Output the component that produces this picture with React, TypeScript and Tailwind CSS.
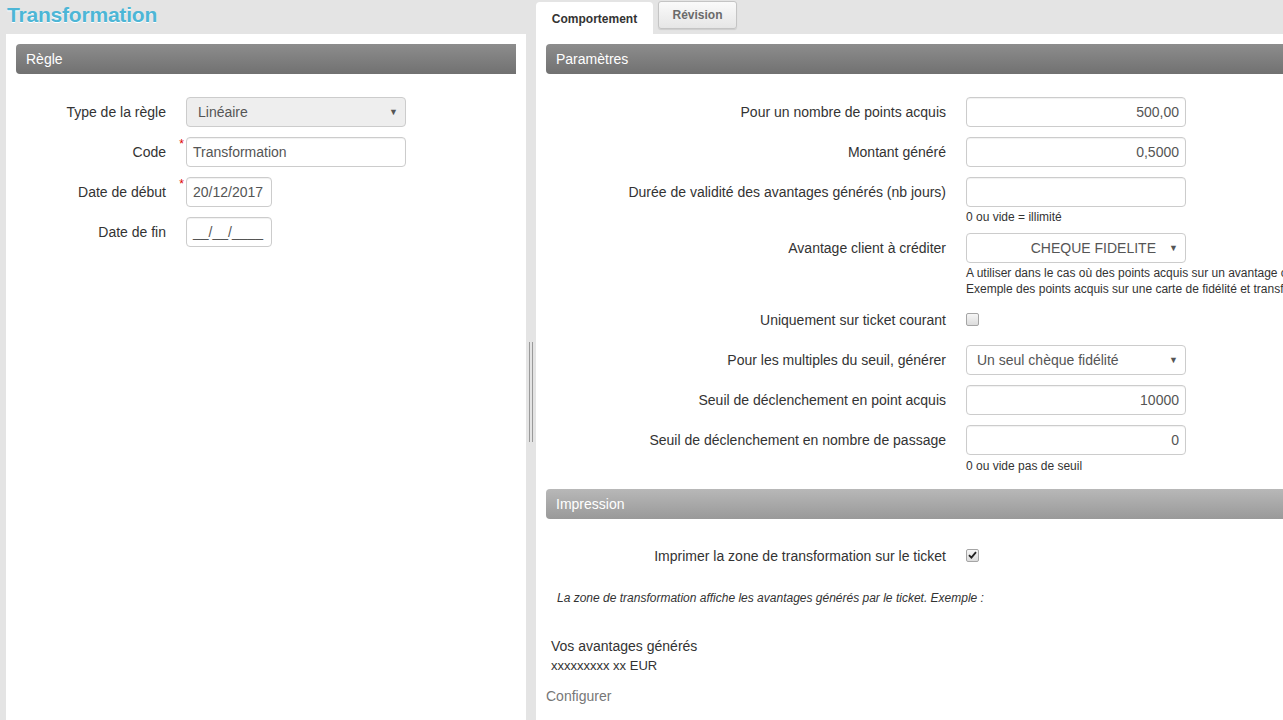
import type { ReactNode } from 'react'

const font = { fontFamily: '"Liberation Sans", Arial, sans-serif' }

function SectionBar({ title, light }: { title: string; light?: boolean }) {
  return (
    <div
      className={`flex h-[30px] items-center rounded-l-[4px] pl-[10px] text-[14px] text-white ${
        light ? 'bg-gradient-to-b from-[#b8b8b8] to-[#999999]' : 'bg-gradient-to-b from-[#8d8d8d] to-[#717171]'
      }`}
    >
      {title}
    </div>
  )
}

function Row({ label, labelW, required, children }: { label: string; labelW: string; required?: boolean; children: ReactNode }) {
  return (
    <div className="flex h-[30px] items-center">
      <div className={`${labelW} shrink-0 text-right text-[14px] text-[#333]`}>{label}</div>
      <div className="relative w-[20px] shrink-0 self-stretch">
        {required && <span className="absolute right-[2px] top-[1px] text-[12px] leading-[12px] text-[#d00]">*</span>}
      </div>
      {children}
    </div>
  )
}

function TextBox({ value, w = 'w-[220px]', right }: { value: string; w?: string; right?: boolean }) {
  return (
    <div
      className={`flex h-[30px] ${w} shrink-0 items-center rounded-[4px] border border-[#ccc] bg-white px-[6px] text-[14px] text-[#555] shadow-[inset_0_1px_1px_rgba(0,0,0,0.06)] ${
        right ? 'justify-end' : ''
      }`}
    >
      {value}
    </div>
  )
}

function Select({ value, w = 'w-[220px]', grey, right }: { value: string; w?: string; grey?: boolean; right?: boolean }) {
  return (
    <div
      className={`relative flex h-[30px] ${w} shrink-0 items-center rounded-[4px] border border-[#ccc] text-[14px] text-[#555] ${
        grey ? 'bg-[#eeeeee] pl-[11px]' : 'bg-white pl-[10px]'
      } ${right ? 'justify-end pr-[29px]' : ''}`}
    >
      {value}
      <span className="absolute right-[7px] top-[8px] text-[9px] text-[#555]">▼</span>
    </div>
  )
}

function Check({ checked }: { checked?: boolean }) {
  return (
    <div className="-mt-[2px] flex h-[13px] w-[13px] items-center justify-center rounded-[2px] border border-[#a5a5a5] bg-gradient-to-b from-[#f6f6f6] to-[#dcdcdc]">
      {checked && (
        <svg width="9" height="8" viewBox="0 0 9 8">
          <path d="M1 4.2 L3.4 6.6 L8 1.2" fill="none" stroke="#222" strokeWidth="1.8" />
        </svg>
      )}
    </div>
  )
}

function Help({ children, className = '' }: { children: ReactNode; className?: string }) {
  return <div className={`ml-[420px] whitespace-nowrap text-[12px] leading-[16px] text-[#333] ${className}`}>{children}</div>
}

export default function App() {
  return (
    <div style={font} className="flex h-[720px] w-[1283px] overflow-hidden bg-[#e4e4e4]">
      {/* left column */}
      <div className="flex w-[526px] shrink-0 flex-col">
        <div className="flex h-[34px] items-start pl-[7px] pt-[2px] text-[21px] font-bold leading-[26px] tracking-[-0.2px] text-[#4db6d6] [text-shadow:0_1px_0_#fff]">
          Transformation
        </div>
        <div className="ml-[6px] flex-1 bg-white px-[10px] pt-[10px]">
          <SectionBar title="Règle" />
          <div className="mt-[23px] flex flex-col gap-[10px]">
            <Row label="Type de la règle" labelW="w-[150px]">
              <Select value="Linéaire" grey />
            </Row>
            <Row label="Code" labelW="w-[150px]" required>
              <TextBox value="Transformation" />
            </Row>
            <Row label="Date de début" labelW="w-[150px]" required>
              <TextBox value="20/12/2017" w="w-[86px]" />
            </Row>
            <Row label="Date de fin" labelW="w-[150px]">
              <TextBox value="__/__/____" w="w-[86px]" />
            </Row>
          </div>
        </div>
      </div>

      {/* splitter */}
      <div className="w-[10px] shrink-0 pl-[3px] pt-[342px]">
        <div className="flex h-[100px] gap-[2px]">
          <div className="w-px bg-[#9a9a9a]" />
          <div className="w-px bg-[#9a9a9a]" />
        </div>
      </div>

      {/* right column */}
      <div className="flex min-w-0 flex-1 flex-col">
        <div className="flex h-[34px] items-end gap-[5px]">
          <div className="flex h-[32px] w-[117px] items-center justify-center rounded-t-[4px] bg-white pt-[2px] text-[12px] font-bold text-[#333]">
            Comportement
          </div>
          <div className="mb-[5px] mt-px flex h-[28px] w-[79px] items-center justify-center self-start rounded-[3px] border border-[#c4c4c4] bg-gradient-to-b from-[#fafafa] to-[#e6e6e6] pb-[1px] text-[12px] font-bold text-[#6a6a6a] shadow-[0_1px_1px_rgba(0,0,0,0.1)]">
            Révision
          </div>
        </div>
        <div className="flex-1 overflow-hidden bg-white pl-[10px] pt-[10px]">
          <SectionBar title="Paramètres" />
          <div className="mt-[23px] flex flex-col">
            <Row label="Pour un nombre de points acquis" labelW="w-[400px]">
              <TextBox value="500,00" right />
            </Row>
            <div className="mt-[10px]">
              <Row label="Montant généré" labelW="w-[400px]">
                <TextBox value="0,5000" right />
              </Row>
            </div>
            <div className="mt-[10px]">
              <Row label="Durée de validité des avantages générés (nb jours)" labelW="w-[400px]">
                <TextBox value="" />
              </Row>
            </div>
            <Help className="mt-[2px]">0 ou vide = illimité</Help>
            <div className="mt-[8px]">
              <Row label="Avantage client à créditer" labelW="w-[400px]">
                <Select value="CHEQUE FIDELITE" right />
              </Row>
            </div>
            <Help className="mt-[2px]">
              A utiliser dans le cas où des points acquis sur un avantage client doivent être transformés en un autre avantage client.
              <br />
              Exemple des points acquis sur une carte de fidélité et transformés en chèque fidélité.
            </Help>
            <div className="mt-[8px]">
              <Row label="Uniquement sur ticket courant" labelW="w-[400px]">
                <Check />
              </Row>
            </div>
            <div className="mt-[10px]">
              <Row label="Pour les multiples du seuil, générer" labelW="w-[400px]">
                <Select value="Un seul chèque fidélité" />
              </Row>
            </div>
            <div className="mt-[10px]">
              <Row label="Seuil de déclenchement en point acquis" labelW="w-[400px]">
                <TextBox value="10000" right />
              </Row>
            </div>
            <div className="mt-[10px]">
              <Row label="Seuil de déclenchement en nombre de passage" labelW="w-[400px]">
                <TextBox value="0" right />
              </Row>
            </div>
            <Help className="mt-[3px]">0 ou vide pas de seuil</Help>
          </div>

          <div className="mt-[15px]">
            <SectionBar title="Impression" light />
          </div>
          <div className="mt-[22px]">
            <Row label="Imprimer la zone de transformation sur le ticket" labelW="w-[400px]">
              <Check checked />
            </Row>
          </div>
          <div className="mt-[19px] pl-[11px] text-[12px] italic leading-[16px] text-[#333]">
            La zone de transformation affiche les avantages générés par le ticket. Exemple :
          </div>
          <div className="mt-[32px] pl-[5px] text-[14px] leading-[16px] text-[#333]">Vos avantages générés</div>
          <div className="mt-[4px] pl-[5px] text-[13px] leading-[16px] text-[#333]">xxxxxxxxx xx EUR</div>
          <div className="mt-[14px] text-[14px] leading-[16px] text-[#777]">Configurer</div>
        </div>
      </div>
    </div>
  )
}
